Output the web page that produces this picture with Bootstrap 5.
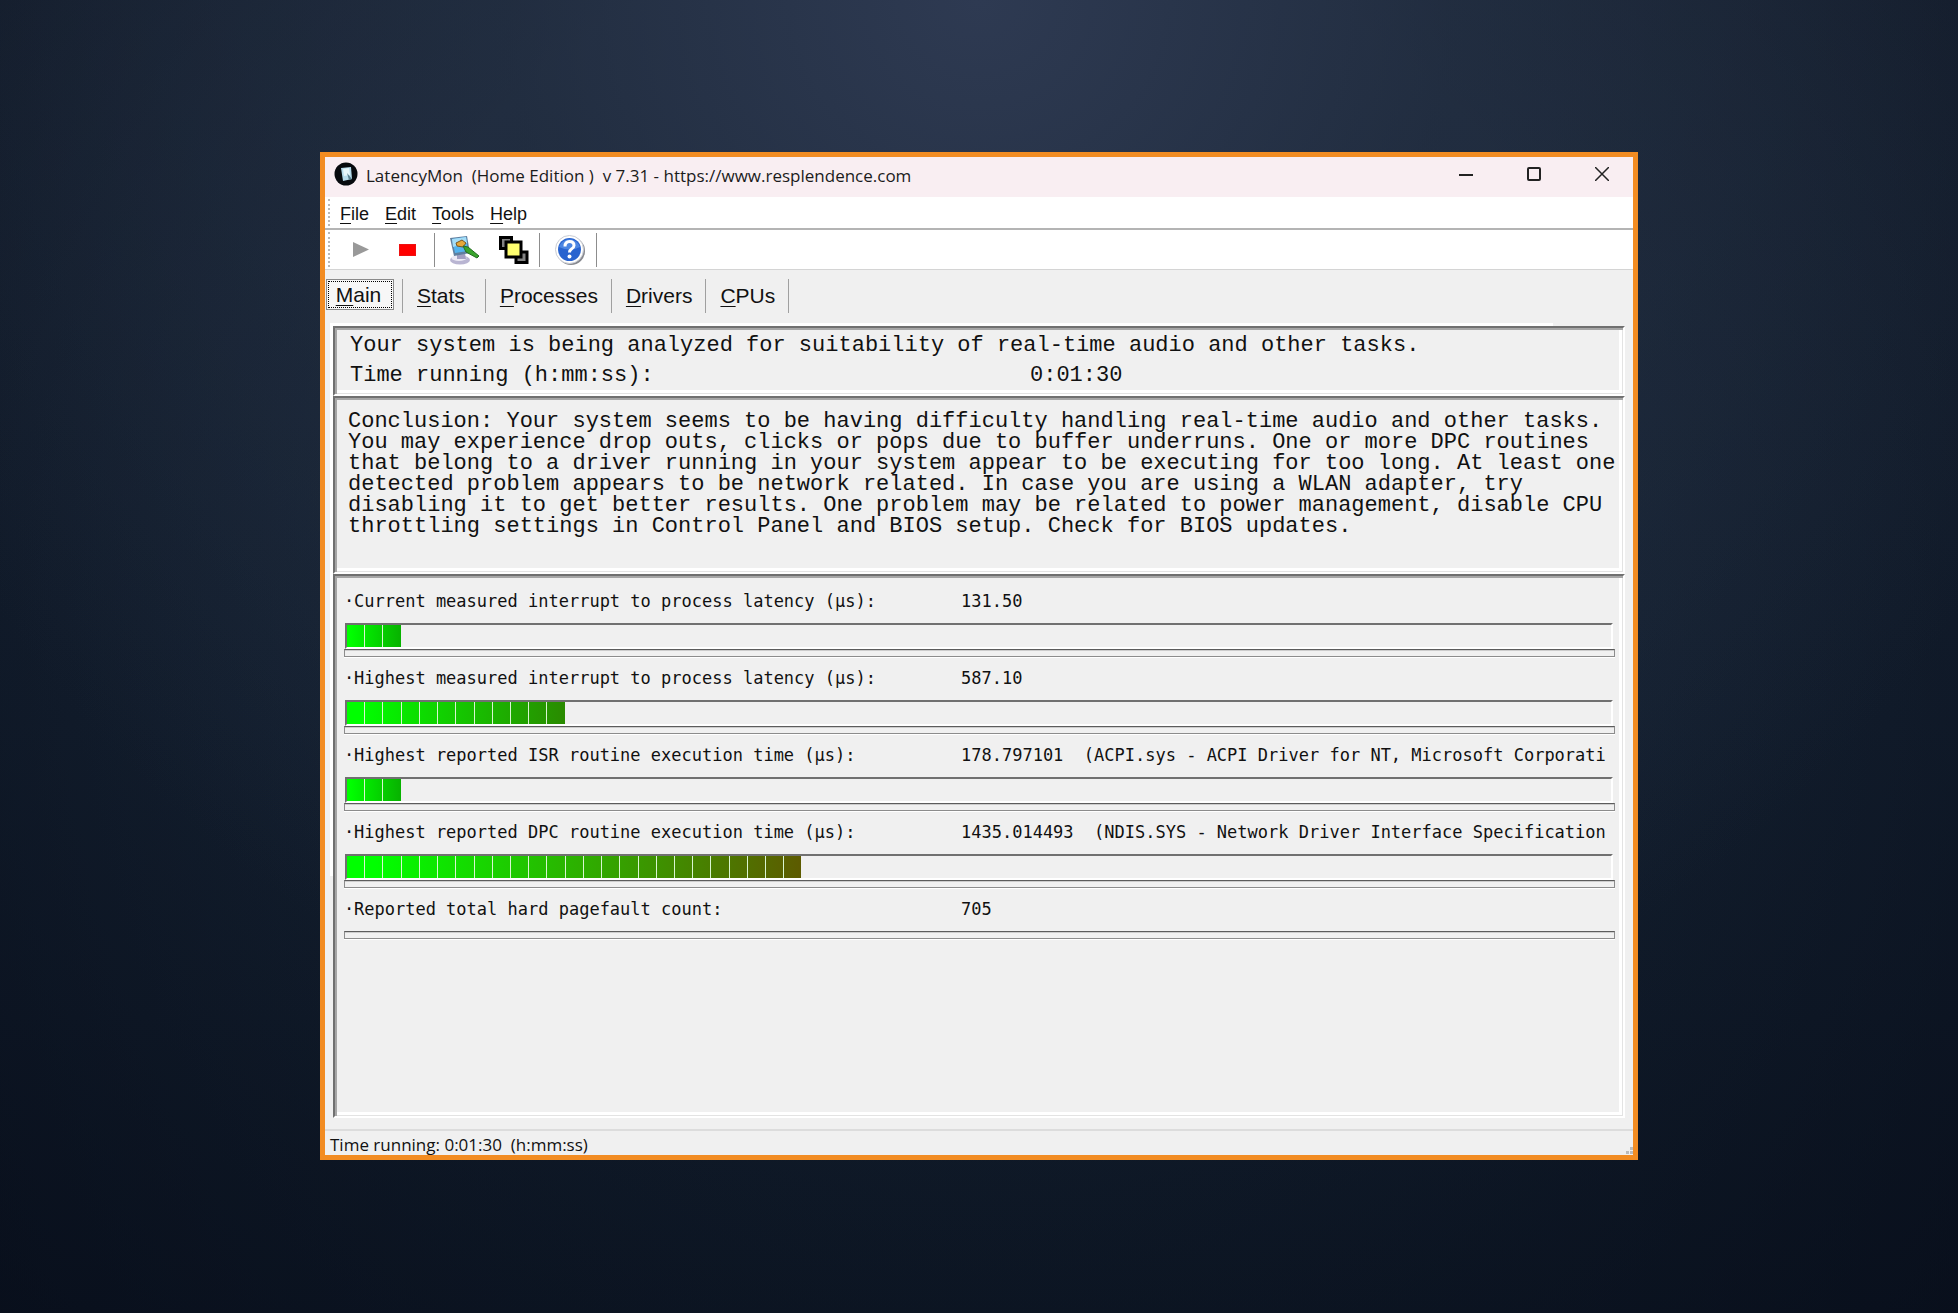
<!DOCTYPE html>
<html lang="en">
<head>
<meta charset="utf-8">
<meta name="viewport" content="width=device-width, initial-scale=1">
<title>LatencyMon</title>
<link href="https://cdn.jsdelivr.net/npm/bootstrap@5.3.0/dist/css/bootstrap.min.css" rel="stylesheet">
<style>
:root { --face: #f0f0f0; --dark: #707070; --mid: #a6a6a6; }
body {
  background:
    radial-gradient(ellipse 60% 85% at 50% 0, #2e3a52 0%, rgba(38,50,71,.6) 40%, rgba(25,36,52,0) 100%),
    radial-gradient(ellipse 80% 110% at 50% 38%, rgba(4,8,18,0) 40%, rgba(4,8,20,.75) 100%),
    linear-gradient(#1b2737 0%, #142030 55%, #0e1826 100%);
  font-family: "Liberation Sans", Arial, sans-serif;
  color: #111;
}
.desktop { padding: 152px 16px 153px; }
.app-window { max-width: 1318px; border: 5px solid #f28c22; background: var(--face); }
.titlebar { height: 40px; background: #f9eef2; font: 17px/38px "Open Sans", sans-serif; padding-left: 9px; }
.titlebar h1 { font: inherit; color: #1b1b1b; white-space: pre; }
.caption-btn { width: 68px; height: 34px; border: 0; background: none; padding: 0; }
.caption-btn.maximize { padding-right: 6px; }
.caption-btn.minimize { padding-right: 6px; }
.caption-btn:last-child { width: 62px; }
.menubar { height: 33px; background: #fff; border-bottom: 2px solid #b4b4b4; padding-left: 15px; gap: 16px; }
.menubar a { font-size: 18px; line-height: 34px; color: #111; text-decoration: none; }
.grip { position: relative; }
.grip::before { content: ""; position: absolute; left: 3px; top: 2px; bottom: 2px; border-left: 2px dotted #b9b9b9; }
.toolbar { height: 40px; background: #fff; border-bottom: 1px solid #d4d4d4; padding-left: 13px; }
.toolbar button { border: 0; background: none; padding: 0; height: 34px; display: grid; place-items: center; }
.tool-sm { width: 46px; }
.tool-md { width: 50px; }
.tool-lg { width: 52px; }
.rule { width: 1px; height: 34px; background: #8d8d8d; }
.tabs { height: 52px; padding: 9px 0 0 1px; }
.tabs button { height: 34px; border: 0; border-right: 1px solid #a0a0a0; background: none; padding: 0 13px 0 14px; font-size: 21px; line-height: 30px; color: #111; }
.tabs .tab-main { height: 31px; width: 68px; border: 1px solid #8a8a8a; outline: 1px dotted #000; outline-offset: -3px; padding: 0 8px 0 5px; background: #f7f7f7; margin-right: 8px; }
.tabs .tab-stats { padding: 0 20px 0 14px; border-left: 1px solid #a0a0a0; }
u { text-underline-offset: 3px; text-decoration-thickness: 1px; }
.stage { position: relative; padding: 4px 8px 11px 8px; }
.stage::before { content: ""; position: absolute; left: 5px; top: 1px; right: 80px; height: 553px; border-top: 3px solid #fff; border-left: 3px solid #fff; }
.sunken { position: relative; background: var(--face); border: 2px solid #fff; border-top-color: var(--dark); border-left-color: var(--dark);
  box-shadow: inset 2px 2px var(--mid), inset -1px -1px #e3e3e3, inset -4px -4px #fff; }
.big-mono { font: 22px/21px "Liberation Mono", monospace; }
.intro { min-height: 70px; padding: 3px 15px; }
.intro p { line-height: 30px; margin: 0; }
#clock { flex: 0 0 578px; }
.verdict { min-height: 178px; padding: 13px 13px; overflow: hidden; }
.verdict p { margin: 0; white-space: pre; }
.gauges { padding: 8px 8px 8px 9px; font: 17px/24px "DejaVu Sans Mono", monospace; }
.gauge { margin-bottom: 4px; }
.gauge-text { height: 39px; padding: 5px 0 0 2px; white-space: pre; overflow: hidden; margin-right: -2px; }
.gauge-text dt { flex: 0 0 615px; font-weight: 400; }
.gauge-text dd { margin: 0; }
.bullet { display: inline-block; width: 8px; text-indent: -2px; }
.meter-track { height: 26px; margin: 0 2px 0 1px; border: 2px solid #fff; border-top-color: var(--dark); border-left-color: var(--dark); }
.meter-fill { height: 22px; background: linear-gradient(90deg, #0f0 6%, var(--end)); }
.meter-fill i { flex: 1; border-right: 1px solid #d9f5d2; }
.meter-fill i:last-child { border-color: var(--face); }
.slot { height: 8px; border: 1px solid #8c8c8c; border-top-color: #5c5c5c; box-shadow: 0 1px #fff, inset 0 1px #ccc; }
.statusbar { height: 26px; border-top: 2px solid #dcdcdc; font: 17px/28px "Open Sans", sans-serif; padding-left: 5px; white-space: pre; }
.statusbar svg { margin-top: 15px; }
</style>
</head>
<body>
<div class="desktop min-vh-100 d-flex justify-content-center">
<main class="app-window w-100 d-flex flex-column">
  <header class="titlebar d-flex">
    <svg class="me-2 mt-1 flex-shrink-0" width="24" height="26" viewBox="0 0 24 26"><circle cx="12" cy="13" r="11.500" fill="#070a0e"/><path d="M7 7l10-1 1 12-9 2z" fill="#b6dcec"/><path d="M9 8l6-1 1 7-6 1z" fill="#e6f6fb"/><path d="M13 12l5 6-3 1z" fill="#5b8190"/></svg>
    <h1 class="m-0 flex-grow-1">LatencyMon  (Home Edition )  v 7.31 - https://www.resplendence.com</h1>
    <button class="caption-btn minimize" aria-label="Minimize"><svg class="d-block mx-auto" width="14" height="14"><path d="M0 8h14" stroke="#222" stroke-width="2"/></svg></button>
    <button class="caption-btn maximize" aria-label="Maximize"><svg class="d-block mx-auto" width="14" height="14"><rect x="1" y="1" width="12" height="12" rx="1" fill="none" stroke="#222" stroke-width="2"/></svg></button>
    <button class="caption-btn" aria-label="Close"><svg class="d-block mx-auto" width="14" height="14"><path d="M0 0l14 14M14 0L0 14" stroke="#222" stroke-width="1.500"/></svg></button>
  </header>
  <nav class="menubar grip d-flex">
    <a href="#"><u>F</u>ile</a><a href="#"><u>E</u>dit</a><a href="#"><u>T</u>ools</a><a href="#"><u>H</u>elp</a>
  </nav>
  <div class="toolbar grip d-flex align-items-center">
    <button class="tool-sm" aria-label="Start"><svg width="16" height="15"><path d="M0 0l16 7.500L0 15z" fill="#999"/></svg></button>
    <button class="tool-sm" aria-label="Stop"><svg width="17" height="12"><path d="M0 0h17v12H0z" fill="#e11"/><path d="M1 1h15v10H1z" fill="#f00"/></svg></button>
    <span class="rule ms-1"></span>
    <button class="tool-md ms-1" aria-label="Options"><svg width="32" height="30" viewBox="0 0 32 30">
      <ellipse cx="12" cy="25" rx="10" ry="4.500" fill="#b9b5d2"/><ellipse cx="11" cy="23" rx="7.500" ry="3" fill="#eceaf5"/><path d="M9 18h8l1 6H9z" fill="#a29fc2"/>
      <path d="M2 3l17-2 3 17-16 3z" fill="#5f7f9f"/><path d="M4 4l14-2 2 14-13 2z" fill="#55b4ee"/><path d="M4 4l14-2 1 6-14 4z" fill="#a4ddf8"/>
      <path d="M8 8l6-3 4 3-3 4-6-1z" fill="#e6a83a" stroke="#7a5520"/><path d="M15 11l5 1 11 9-2 2-11-6z" fill="#39a52c" stroke="#246c20"/></svg></button>
    <button class="tool-md" aria-label="Windows"><svg width="30" height="28" viewBox="0 0 30 28"><path d="M1.500 1.500h11v11h-11zM17 16h11v10.500H17z" fill="#828282" stroke="#000" stroke-width="3"/><path d="M7 6h15v15H7z" fill="#ffff70" stroke="#000" stroke-width="3"/></svg></button>
    <span class="rule"></span>
    <button class="tool-lg ms-1" aria-label="Help"><svg width="32" height="32" viewBox="0 0 32 32"><circle cx="17" cy="17" r="14" fill="#87898f"/><circle cx="15.500" cy="15.500" r="14" fill="#fff" stroke="#c9ccd3"/><circle cx="15.500" cy="15.500" r="11.500" fill="#2863cf"/><path d="M5 13a11 11 0 0121 0q-10 5-21 0z" fill="#4c86e2"/><path d="M11 12.500q0-5 4.500-5t4.500 4q0 2-2.500 3.500-2 1.200-2 3.500" fill="none" stroke="#fff" stroke-width="3"/><circle cx="15.500" cy="22.500" r="2" fill="#fff"/></svg></button>
    <span class="rule"></span>
  </div>
  <div class="tabs d-flex" role="tablist">
    <button class="tab-main" role="tab" aria-selected="true"><u>M</u>ain</button>
    <button class="tab-stats" role="tab"><u>S</u>tats</button>
    <button role="tab"><u>P</u>rocesses</button>
    <button role="tab"><u>D</u>rivers</button>
    <button role="tab"><u>C</u>PUs</button>
  </div>
  <div class="stage flex-grow-1 d-flex flex-column">
    <section class="sunken intro big-mono">
      <p>Your system is being analyzed for suitability of real-time audio and other tasks.</p>
      <div class="d-flex"><p class="flex-grow-1">Time running (h:mm:ss):</p><p id="clock">0:01:30</p></div>
    </section>
    <section class="sunken verdict big-mono">
      <p>Conclusion: Your system seems to be having difficulty handling real-time audio and other tasks.
You may experience drop outs, clicks or pops due to buffer underruns. One or more DPC routines
that belong to a driver running in your system appear to be executing for too long. At least one
detected problem appears to be network related. In case you are using a WLAN adapter, try
disabling it to get better results. One problem may be related to power management, disable CPU
throttling settings in Control Panel and BIOS setup. Check for BIOS updates.</p>
    </section>
    <section class="sunken gauges flex-grow-1" id="gauges"></section>
  </div>
  <footer class="statusbar d-flex justify-content-between"><span>Time running: 0:01:30  (h:mm:ss)</span><svg width="8" height="8"><path d="M1 5h3v3H1zM5 5h3v3H5zM5 1h3v3H5z" fill="#bbb"/></svg></footer>
</main>
</div>
<script>
const track = 69.4; // blocks that a full meter holds
const rows = [
  ["Current measured interrupt to process latency (µs):", "131.50", 3, "#08b000"],
  ["Highest measured interrupt to process latency (µs):", "587.10", 12, "#2a8a00"],
  ["Highest reported ISR routine execution time (µs):", "178.797101  (ACPI.sys - ACPI Driver for NT, Microsoft Corporati", 3, "#08b000"],
  ["Highest reported DPC routine execution time (µs):", "1435.014493  (NDIS.SYS - Network Driver Interface Specification", 25, "#5d5a00"],
  ["Reported total hard pagefault count:", "705", 0, ""]
];
document.getElementById("gauges").innerHTML = rows.map(([label, value, n, end]) => `
  <div class="gauge">
    <dl class="gauge-text d-flex mb-0"><dt><span class="bullet">·</span>${label}</dt><dd>${value}</dd></dl>
    ${n ? `<div class="meter-track" role="meter" aria-label="${label}" aria-valuenow="${n}" aria-valuemin="0" aria-valuemax="69"><div class="meter-fill d-flex" style="width:${(n / track * 100).toFixed(2)}%;--end:${end}">${"<i></i>".repeat(n)}</div></div>` : ""}
    <div class="slot"></div>
  </div>`).join("");
</script>
<script src="https://cdn.jsdelivr.net/npm/bootstrap@5.3.0/dist/js/bootstrap.bundle.min.js"></script>
</body>
</html>
